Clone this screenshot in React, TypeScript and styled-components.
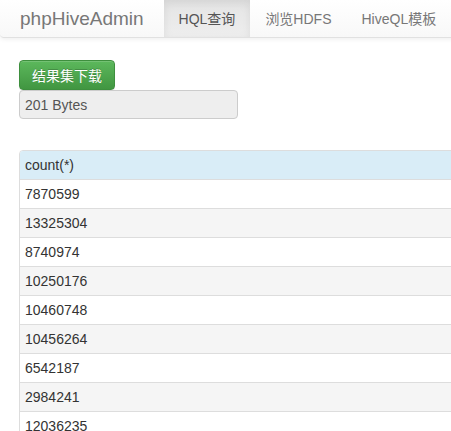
import styled, { createGlobalStyle } from "styled-components";

const GlobalStyle = createGlobalStyle`
  html, body {
    margin: 0;
    padding: 0;
    background: #fff;
    overflow: hidden;
  }
  body {
    font-family: "Liberation Sans", Arial, "Noto Sans CJK SC", sans-serif;
    font-size: 14px;
    line-height: 20px;
    color: #333;
  }
`;

const Navbar = styled.div`
  display: flex;
  align-items: stretch;
  height: 38px;
  width: 480px;
  background-image: linear-gradient(to bottom, #fff 0, #f8f8f8 100%);
  border: 1px solid #e1e1e1;
  border-top: none;
  border-left: none;
  border-radius: 0 0 4px 4px;
  box-shadow: 0 1px 5px rgba(0, 0, 0, 0.075);
  box-sizing: border-box;
`;

const Brand = styled.div`
  display: flex;
  align-items: center;
  padding: 0 20px 0 20px;
  font-size: 19px;
  color: #777;
`;

const NavItem = styled.div<{ $active?: boolean }>`
  display: flex;
  align-items: center;
  padding: 0 15px;
  font-size: 14px;
  color: ${(p) => (p.$active ? "#555" : "#777")};
  background-image: ${(p) =>
    p.$active ? "linear-gradient(to bottom, #e4e4e4 0, #eeeeee 100%)" : "none"};
  box-shadow: ${(p) => (p.$active ? "inset 0 3px 9px rgba(0,0,0,0.075)" : "none")};
`;

const Content = styled.div`
  padding: 22px 0 0 19px;
`;

const DownloadButton = styled.button`
  display: block;
  width: 96px;
  height: 30px;
  padding: 0;
  font-family: inherit;
  font-size: 14px;
  color: #fff;
  background-image: linear-gradient(to bottom, #5cb85c 0, #419641 100%);
  border: 1px solid #3e8f3e;
  border-radius: 4px;
  box-shadow: inset 0 1px 0 rgba(255, 255, 255, 0.15), 0 1px 1px rgba(0, 0, 0, 0.075);
  text-shadow: 0 -1px 0 rgba(0, 0, 0, 0.2);
`;

const SizeField = styled.div`
  width: 219px;
  height: 29px;
  box-sizing: border-box;
  padding: 0 5px;
  display: flex;
  align-items: center;
  background: #eee;
  border: 1px solid #ccc;
  border-radius: 4px;
  color: #555;
`;

const Table = styled.div`
  margin-top: 31px;
  width: 600px;
  border: 1px solid #ddd;
  border-radius: 4px 4px 0 0;
  overflow: hidden;
`;

const Row = styled.div<{ $kind: "head" | "odd" | "even" }>`
  height: 29px;
  box-sizing: border-box;
  padding: 4px 5px;
  border-top: ${(p) => (p.$kind === "head" ? "none" : "1px solid #ddd")};
  background: ${(p) =>
    p.$kind === "head" ? "#d9edf7" : p.$kind === "even" ? "#f5f5f5" : "#fff"};
  height: ${(p) => (p.$kind === "head" ? "28px" : "29px")};
`;

const counts = [
  "7870599",
  "13325304",
  "8740974",
  "10250176",
  "10460748",
  "10456264",
  "6542187",
  "2984241",
  "12036235",
];

export default function App() {
  return (
    <>
      <GlobalStyle />
      <Navbar>
        <Brand>phpHiveAdmin</Brand>
        <NavItem $active>HQL查询</NavItem>
        <NavItem>浏览HDFS</NavItem>
        <NavItem>HiveQL模板</NavItem>
      </Navbar>
      <Content>
        <DownloadButton>结果集下载</DownloadButton>
        <SizeField>201 Bytes</SizeField>
        <Table>
          <Row $kind="head">count(*)</Row>
          {counts.map((c, i) => (
            <Row key={c} $kind={i % 2 === 0 ? "odd" : "even"}>
              {c}
            </Row>
          ))}
        </Table>
      </Content>
    </>
  );
}
